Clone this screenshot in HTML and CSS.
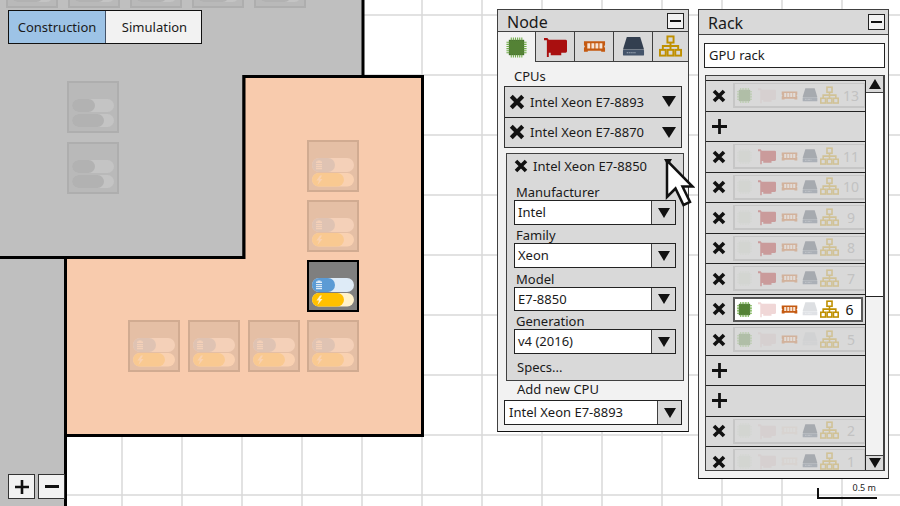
FILE: index.html
```html
<!DOCTYPE html>
<html lang="en">
<head>
<meta charset="utf-8">
<title>Datacenter builder</title>
<link rel="stylesheet" href="styles.css">
</head>
<body>
<svg class="sprite" width="0" height="0" aria-hidden="true">
  <symbol id="i-cpu" viewBox="0 0 24 24">
    <rect x="4.5" y="4.5" width="15" height="15" fill="#548235" stroke="#3f6b24"/>
    <path d="M6 3H18.5M6 21H18.5M3 6V18.5M21 6V18.5" stroke="#70ad47" stroke-width="3" stroke-dasharray="1.1 1.1" fill="none"/>
  </symbol>
  <symbol id="i-gpu" viewBox="0 0 24 24">
    <path d="M0 3H3.500L5 5H22.500Q24 5 24 6.500V17Q24 18.500 22.500 18.500H18V21H7V18.500H5V23H3V5.500H0Z" fill="#a90f0f"/>
  </symbol>
  <symbol id="i-ram" viewBox="0 0 24 24">
    <path d="M1 6.500H23V10.500L22 12L23 13.500V17.500H19V16.500H5V17.500H1V13.500L2 12L1 10.500Z" fill="#c55a11"/>
    <path d="M4.500 8.500h3v5.500h-3zM8.800 8.500h3v5.500h-3zM13 8.500h3v5.500h-3zM17.200 8.500h3v5.500h-3z" fill="#f8e5d6"/>
  </symbol>
  <symbol id="i-disk" viewBox="0 0 24 24">
    <path d="M5 2H19L23 15H1Z" fill="#333f50"/>
    <rect x="1" y="15.500" width="22" height="6" rx="1" fill="#44546a"/>
    <path d="M5 18.500H15" stroke="#c9d0da" stroke-width="1.200" stroke-dasharray="1 1"/>
  </symbol>
  <symbol id="i-net" viewBox="0 0 24 24">
    <g fill="none" stroke="#bf9000" stroke-width="2">
      <rect x="8.800" y="1.500" width="6.400" height="6.400"/>
      <rect x="1" y="15.500" width="6" height="6"/>
      <rect x="9" y="15.500" width="6" height="6"/>
      <rect x="17" y="15.500" width="6" height="6"/>
      <path d="M12 8V15.500M4 15.500V11.500H20V15.500"/>
    </g>
  </symbol>
  <symbol id="i-x" viewBox="0 0 14 14">
    <path d="M2 2L12 12M12 2L2 12" stroke="currentColor" stroke-width="3.600" fill="none"/>
  </symbol>
  <symbol id="i-plus" viewBox="0 0 14 14">
    <path d="M7 0V14M0 7H14" stroke="currentColor" stroke-width="2.600" fill="none"/>
  </symbol>
  <symbol id="tile" viewBox="0 0 52 52">
    <rect x="1" y="1" width="50" height="50" class="tile-box"/>
    <rect x="5" y="18" width="42" height="14" rx="7" fill="#deebf7"/>
    <rect x="5" y="18" width="23" height="14" rx="7" fill="#5b9bd5"/>
    <rect x="5" y="33" width="42" height="13.500" rx="6.700" fill="#fff2cc"/>
    <rect x="5" y="33" width="32" height="13.500" rx="6.700" fill="#ffc000"/>
    <path d="M10.500 20.500h3v1h1.500v1.500H9v-1.500h1.500zM9 24h6v1.200H9zM9 26h6v1.200H9zM9 28h6v1.200H9z" fill="#deebf7"/>
    <path d="M13 35.500L9.500 40.500H12L10.500 45L15.500 39H13L15 35.500Z" fill="#fff2cc"/>
  </symbol>
  <symbol id="tile-off" viewBox="0 0 52 52">
    <rect x="1" y="1" width="50" height="50" fill="#b9b9b9" stroke="#aeaeae" stroke-width="2"/>
    <rect x="5" y="18" width="42" height="13" rx="6.500" fill="#c4c4c4"/>
    <rect x="5" y="18" width="23" height="13" rx="6.500" fill="#b2b2b2"/>
    <rect x="5" y="33" width="42" height="13" rx="6.500" fill="#c4c4c4"/>
    <rect x="5" y="33" width="32" height="13" rx="6.500" fill="#b2b2b2"/>
  </symbol>
</svg>

<div class="canvas">
  <svg class="map" width="900" height="506" viewBox="0 0 900 506" aria-hidden="true">
    <defs>
      <pattern id="grid" x="1" y="14" width="60" height="60" patternUnits="userSpaceOnUse">
        <path d="M1 0V60M0 1H60" stroke="#d9d9d9" stroke-width="1.500" fill="none"/>
      </pattern>
    </defs>
    <rect width="900" height="506" fill="#fff"/>
    <rect width="900" height="506" fill="url(#grid)"/>
    <path d="M-5 -5H363V76.500H244V257.500H-5Z" class="room-grey"/>
    <path d="M-5 257.500H65.500V511H-5Z" class="room-grey"/>
    <path d="M244 76.500H422.500V435.500H65.500V257.500H244Z" class="room-peach"/>
    <use href="#tile-off" x="6" y="-44" width="52" height="52"/>
    <use href="#tile-off" x="68" y="-44" width="52" height="52"/>
    <use href="#tile-off" x="130" y="-44" width="52" height="52"/>
    <use href="#tile-off" x="192" y="-44" width="52" height="52"/>
    <use href="#tile-off" x="254" y="-44" width="52" height="52"/>
    <use href="#tile-off" x="67" y="81" width="52" height="52"/>
    <use href="#tile-off" x="67" y="142" width="52" height="52"/>
    <g class="tile-faded">
      <use href="#tile" x="307" y="140" width="52" height="52"/>
      <use href="#tile" x="307" y="200" width="52" height="52"/>
      <use href="#tile" x="128" y="320" width="52" height="52"/>
      <use href="#tile" x="188" y="320" width="52" height="52"/>
      <use href="#tile" x="248" y="320" width="52" height="52"/>
      <use href="#tile" x="307" y="320" width="52" height="52"/>
    </g>
    <use href="#tile" class="tile-active" x="307" y="260" width="52" height="52"/>
  </svg>

  <div class="mode-toggle">
    <div class="mode mode-on">Construction</div>
    <div class="mode">Simulation</div>
  </div>

  <div class="zoom-controls">
    <button class="zoom-btn"><svg class="zoom-icon"><use href="#i-plus"/></svg></button>
    <button class="zoom-btn"><span class="minus-bar"></span></button>
  </div>

  <div class="scale">
    <span class="scale-label">0.5 m</span>
  </div>

  <section class="window window-node">
    <header class="win-head">
      <span class="win-title">Node</span>
      <button class="win-min"><span class="minus-small"></span></button>
    </header>
    <nav class="tabs">
      <div class="tab tab-on"><svg class="tab-icon"><use href="#i-cpu"/></svg></div>
      <div class="tab"><svg class="tab-icon"><use href="#i-gpu"/></svg></div>
      <div class="tab"><svg class="tab-icon"><use href="#i-ram"/></svg></div>
      <div class="tab"><svg class="tab-icon"><use href="#i-disk"/></svg></div>
      <div class="tab tab-last"><svg class="tab-icon"><use href="#i-net"/></svg></div>
    </nav>
    <div class="section-label">CPUs</div>
    <div class="cpu-list">
      <div class="cpu-row">
        <svg class="x-icon"><use href="#i-x"/></svg>
        <span class="cpu-name">Intel Xeon E7-8893</span>
        <span class="tri tri-big"></span>
      </div>
      <div class="cpu-row">
        <svg class="x-icon"><use href="#i-x"/></svg>
        <span class="cpu-name">Intel Xeon E7-8870</span>
        <span class="tri tri-big"></span>
      </div>
    </div>
    <div class="cpu-open">
      <div class="cpu-open-head">
        <svg class="x-icon x-small"><use href="#i-x"/></svg>
        <span class="cpu-name">Intel Xeon E7-8850</span>
        <span class="tri tri-covered"></span>
      </div>
      <label class="field-label">Manufacturer</label>
      <div class="select"><span class="select-value">Intel</span><span class="select-btn"><span class="tri"></span></span></div>
      <label class="field-label label-family">Family</label>
      <div class="select"><span class="select-value">Xeon</span><span class="select-btn"><span class="tri"></span></span></div>
      <label class="field-label label-model">Model</label>
      <div class="select select-short"><span class="select-value">E7-8850</span><span class="select-btn"><span class="tri"></span></span></div>
      <label class="field-label label-gen">Generation</label>
      <div class="select"><span class="select-value">v4 (2016)</span><span class="select-btn"><span class="tri"></span></span></div>
      <div class="specs">Specs...</div>
    </div>
    <div class="add-label">Add new CPU</div>
    <div class="select select-add"><span class="select-value">Intel Xeon E7-8893</span><span class="select-btn"><span class="tri"></span></span></div>
  </section>

  <section class="window window-rack">
    <header class="win-head win-head-rack">
      <span class="win-title">Rack</span>
      <button class="win-min"><span class="minus-small"></span></button>
    </header>
    <div class="rack-name">GPU rack</div>
    <div class="rack-list">
      <div class="rows">
        <div class="row-stub"></div>
        <div class="row"><svg class="row-x"><use href="#i-x"/></svg>
          <div class="card"><svg class="ic-cpu on"><use href="#i-cpu"/></svg><svg class="ic-gpu off"><use href="#i-gpu"/></svg><svg class="ic-ram on"><use href="#i-ram"/></svg><svg class="ic-disk on"><use href="#i-disk"/></svg><svg class="ic-net on"><use href="#i-net"/></svg><span class="num">13</span></div></div>
        <div class="row"><svg class="row-plus"><use href="#i-plus"/></svg></div>
        <div class="row"><svg class="row-x"><use href="#i-x"/></svg>
          <div class="card"><svg class="ic-cpu off"><use href="#i-cpu"/></svg><svg class="ic-gpu on"><use href="#i-gpu"/></svg><svg class="ic-ram on"><use href="#i-ram"/></svg><svg class="ic-disk on"><use href="#i-disk"/></svg><svg class="ic-net on"><use href="#i-net"/></svg><span class="num">11</span></div></div>
        <div class="row"><svg class="row-x"><use href="#i-x"/></svg>
          <div class="card"><svg class="ic-cpu off"><use href="#i-cpu"/></svg><svg class="ic-gpu on"><use href="#i-gpu"/></svg><svg class="ic-ram on"><use href="#i-ram"/></svg><svg class="ic-disk on"><use href="#i-disk"/></svg><svg class="ic-net on"><use href="#i-net"/></svg><span class="num">10</span></div></div>
        <div class="row"><svg class="row-x"><use href="#i-x"/></svg>
          <div class="card"><svg class="ic-cpu off"><use href="#i-cpu"/></svg><svg class="ic-gpu on"><use href="#i-gpu"/></svg><svg class="ic-ram on"><use href="#i-ram"/></svg><svg class="ic-disk on"><use href="#i-disk"/></svg><svg class="ic-net on"><use href="#i-net"/></svg><span class="num">9</span></div></div>
        <div class="row"><svg class="row-x"><use href="#i-x"/></svg>
          <div class="card"><svg class="ic-cpu off"><use href="#i-cpu"/></svg><svg class="ic-gpu on"><use href="#i-gpu"/></svg><svg class="ic-ram on"><use href="#i-ram"/></svg><svg class="ic-disk on"><use href="#i-disk"/></svg><svg class="ic-net on"><use href="#i-net"/></svg><span class="num">8</span></div></div>
        <div class="row"><svg class="row-x"><use href="#i-x"/></svg>
          <div class="card"><svg class="ic-cpu off"><use href="#i-cpu"/></svg><svg class="ic-gpu on"><use href="#i-gpu"/></svg><svg class="ic-ram on"><use href="#i-ram"/></svg><svg class="ic-disk on"><use href="#i-disk"/></svg><svg class="ic-net on"><use href="#i-net"/></svg><span class="num">7</span></div></div>
        <div class="row"><svg class="row-x"><use href="#i-x"/></svg>
          <div class="card card-sel"><svg class="ic-cpu"><use href="#i-cpu"/></svg><svg class="ic-gpu dim"><use href="#i-gpu"/></svg><svg class="ic-ram"><use href="#i-ram"/></svg><svg class="ic-disk dim"><use href="#i-disk"/></svg><svg class="ic-net"><use href="#i-net"/></svg><span class="num">6</span></div></div>
        <div class="row"><svg class="row-x"><use href="#i-x"/></svg>
          <div class="card"><svg class="ic-cpu on"><use href="#i-cpu"/></svg><svg class="ic-gpu off"><use href="#i-gpu"/></svg><svg class="ic-ram on"><use href="#i-ram"/></svg><svg class="ic-disk off"><use href="#i-disk"/></svg><svg class="ic-net on"><use href="#i-net"/></svg><span class="num">5</span></div></div>
        <div class="row"><svg class="row-plus"><use href="#i-plus"/></svg></div>
        <div class="row"><svg class="row-plus"><use href="#i-plus"/></svg></div>
        <div class="row"><svg class="row-x"><use href="#i-x"/></svg>
          <div class="card"><svg class="ic-cpu off"><use href="#i-cpu"/></svg><svg class="ic-gpu off"><use href="#i-gpu"/></svg><svg class="ic-ram off"><use href="#i-ram"/></svg><svg class="ic-disk on"><use href="#i-disk"/></svg><svg class="ic-net on"><use href="#i-net"/></svg><span class="num">2</span></div></div>
        <div class="row"><svg class="row-x"><use href="#i-x"/></svg>
          <div class="card"><svg class="ic-cpu off"><use href="#i-cpu"/></svg><svg class="ic-gpu off"><use href="#i-gpu"/></svg><svg class="ic-ram off"><use href="#i-ram"/></svg><svg class="ic-disk on"><use href="#i-disk"/></svg><svg class="ic-net on"><use href="#i-net"/></svg><span class="num">1</span></div></div>
      </div>
      <div class="scrollbar">
        <div class="scroll-btn"><span class="tri tri-up"></span></div>
        <div class="scroll-track"><div class="scroll-thumb"></div></div>
        <div class="scroll-btn scroll-btn-down"><span class="tri"></span></div>
      </div>
    </div>
  </section>

  <svg class="cursor" width="30" height="50" viewBox="0 0 30 50" aria-hidden="true">
    <path d="M2 1.500V38L10.500 29.500L18.500 46L25 43L17.500 27.500H27.500Z" fill="#fff" stroke="#111" stroke-width="2.500" stroke-linejoin="miter"/>
  </svg>
</div>
</body>
</html>
```
FILE: styles.css
```css
* { box-sizing: border-box; }
html, body { margin: 0; padding: 0; }
body {
  width: 900px;
  height: 506px;
  overflow: hidden;
  font-family: "Noto Sans", "Open Sans", sans-serif;
  font-size: 13px;
  color: #1a1a1a;
}
.sprite { position: absolute; }
.canvas { position: relative; width: 900px; height: 506px; overflow: hidden; }
.map { position: absolute; left: 0; top: 0; }
.room-grey { fill: #bfbfbf; stroke: #000; stroke-width: 3; }
.room-peach { fill: #f8cbad; stroke: #000; stroke-width: 3; }
.tile-box { fill: #7f7f7f; stroke: #000; stroke-width: 2; }
.tile-faded { opacity: 0.16; }

.mode-toggle {
  position: absolute; left: 8px; top: 10px;
  display: flex; width: 194px; height: 34px;
  border: 1px solid #111;
  background: #f2f2f2;
}
.mode { flex: 0 0 97px; display: flex; align-items: center; justify-content: center; }
.mode-on { background: #9dc3e6; border-right: 1px solid #44546a; }

.zoom-controls { position: absolute; left: 8px; top: 474px; display: flex; gap: 3px; }
.zoom-btn {
  width: 27px; height: 25px; padding: 0;
  display: flex; align-items: center; justify-content: center;
  background: #f2f2f2; border: 1px solid #333; color: #111;
}
.zoom-icon { width: 14px; height: 14px; }
.minus-bar { display: block; width: 14px; height: 3px; background: #111; }

.scale {
  position: absolute; left: 817px; top: 488px; width: 60px; height: 11px;
  border-left: 2px solid #111; border-bottom: 2px solid #111;
}
.scale-label { position: absolute; right: 1px; top: -6px; font-size: 9px; line-height: 12px; white-space: nowrap; }

.window {
  position: absolute;
  background: #f2f2f2;
  border: 1px solid #404040;
  border-bottom-color: #111;
}
.window-node { left: 497px; top: 9px; width: 192px; height: 423px; }
.window-rack { left: 698px; top: 9px; width: 191px; height: 470px; }
.win-head {
  display: flex; justify-content: space-between; align-items: center;
  height: 22px; padding: 0 4px 0 9px;
  background: #d9d9d9;
  border-bottom: 1px solid #404040;
}
.win-head-rack { height: 25px; padding-right: 3px; }
.win-title { font-size: 16px; line-height: 22px; position: relative; top: 1px; }
.win-min {
  width: 17px; height: 16px; padding: 0;
  display: flex; align-items: center; justify-content: center;
  background: #f2f2f2; border: 1px solid #222;
}
.minus-small { display: block; width: 11px; height: 2px; background: #111; }

.tabs { display: flex; height: 30px; }
.tab {
  flex: 0 0 39px;
  display: flex; align-items: center; justify-content: center;
  background: #d9d9d9;
  border-right: 1px solid #404040;
  border-bottom: 1px solid #404040;
}
.tab-on { background: #f2f2f2; border-bottom: 0; flex-basis: 38px; }
.tab-last { flex: 1 1 auto; border-right: 0; }
.tab-icon { width: 23px; height: 23px; }

.section-label { margin: 5px 0 0 16px; height: 19px; line-height: 18px; }
.cpu-list { margin-left: 6px; width: 178px; border: 1px solid #333; background: #d9d9d9; }
.cpu-row {
  display: flex; align-items: center;
  height: 30px; padding: 0 5px 1px 5px;
}
.cpu-row + .cpu-row { border-top: 1px solid #222; height: 30px; }
.x-icon { width: 16px; height: 16px; flex: none; color: #111; margin: 0 5px 0 -1px; }
.x-small { width: 14px; height: 14px; margin: 0 5px 0 0; }
.cpu-name { flex: 1 1 auto; white-space: nowrap; }
.tri {
  display: block; width: 0; height: 0; flex: none;
  border-left: 6px solid transparent;
  border-right: 6px solid transparent;
  border-top: 10px solid #111;
}
.tri-big { border-left-width: 7px; border-right-width: 7px; border-top-width: 11px; }
.tri-up { border-top: 0; border-bottom: 10px solid #111; }
.tri-covered {
  border-left-width: 4px; border-right-width: 4px; border-top-width: 7px;
  margin: -7px 4px 0 0;
}

.cpu-open {
  margin: 5px 0 0 8px; width: 178px; height: 228px;
  padding: 0 7px 0 7px;
  background: #d9d9d9;
  border: 1px solid #404040;
}
.cpu-open-head {
  display: flex; align-items: center;
  height: 24px;
  margin: 0 0 6px 0;
}
.field-label { display: block; height: 16px; line-height: 16px; padding-left: 2px; }
.label-family { margin-top: 2px; }
.label-model { margin-top: 3px; }
.label-gen { margin-top: 2px; }
.select {
  display: flex; height: 25px; width: 162px;
  background: #fff; border: 1px solid #222;
}
.select-short { height: 24px; }
.select-value { flex: 1 1 auto; padding-left: 3px; line-height: 23px; white-space: nowrap; }
.select-btn {
  flex: 0 0 24px;
  display: flex; align-items: center; justify-content: center;
  background: #d9d9d9; border-left: 1px solid #404040;
}
.specs { margin: 4px 0 0 3px; line-height: 18px; }
.add-label { margin: -1px 0 0 19px; height: 20px; line-height: 18px; }
.select-add { margin-left: 6px; width: 178px; }
.select-add .select-value { padding-left: 4px; }

.rack-name {
  margin: 8px 0 0 5px; width: 181px; height: 25px;
  padding-left: 4px; line-height: 23px;
  background: #fff; border: 1px solid #222;
}
.rack-list {
  display: flex; margin: 7px 0 0 6px; width: 180px; height: 396px;
  border: 1px solid #404040; border-right-width: 2px;
}
.rows { flex: 0 0 160px; overflow: hidden; }
.row-stub { height: 5px; background: #d9d9d9; border-bottom: 1px solid #222; }
.row {
  display: flex; align-items: center;
  height: 30.500px;
  background: #d9d9d9;
  border-bottom: 1px solid #222;
  border-right: 1px solid #222;
  flex: none;
}
.row-x { width: 14px; height: 14px; margin: 0 7px 0 6px; color: #111; flex: none; }
.row-plus { width: 15px; height: 15px; margin-left: 6px; color: #111; flex: none; }
.card {
  flex: 0 0 132px; height: 25px; margin-left: 0;
  display: grid; grid-template-columns: 22px 23px 21px 18px 22px 1fr; align-items: center;
  padding-left: 1px;
  border: 1px solid #c6c6c6; border-width: 1px 1px 2px 2px;
}
.card svg { display: block; }
.ic-cpu { width: 17px; height: 17px; }
.ic-gpu { width: 18px; height: 18px; }
.ic-ram { width: 17px; height: 17px; }
.ic-disk { width: 16px; height: 16px; }
.ic-net { width: 19px; height: 19px; }
.on { opacity: 0.3; }
.off { opacity: 0.04; }
.dim { opacity: 0.16; }
.num { font-size: 14px; color: #c2c2c2; text-align: center; padding-right: 4px; }
.card-sel { background: #fff; border: 2px solid #595959; flex-basis: 130px; padding-left: 1px; }
.card-sel .num { color: #111; }

.scrollbar { flex: 1 1 auto; display: flex; flex-direction: column; }
.scroll-btn {
  flex: 0 0 17px;
  display: flex; align-items: center; justify-content: center;
  background: #d9d9d9; border-bottom: 1px solid #404040;
}
.scroll-btn-down { border-bottom: 0; border-top: 1px solid #404040; flex-basis: 15px; }
.scroll-track { flex: 1 1 auto; background: #fff; padding-top: 203px; }
.scroll-thumb { height: 100%; background: #f2f2f2; border-top: 1px solid #222; }

.cursor { position: absolute; left: 665px; top: 159px; }
```
